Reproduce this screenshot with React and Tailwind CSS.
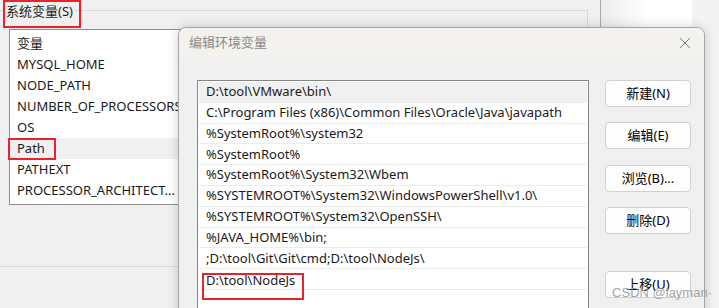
import React from 'react';

const font = { fontFamily: '"Noto Sans", "Noto Sans CJK SC", sans-serif' };

const sysVars = ['MYSQL_HOME', 'NODE_PATH', 'NUMBER_OF_PROCESSORS', 'OS', 'Path', 'PATHEXT', 'PROCESSOR_ARCHITECT...'];

const paths = [
    'D:\\tool\\VMware\\bin\\',
    'C:\\Program Files (x86)\\Common Files\\Oracle\\Java\\javapath',
    '%SystemRoot%\\system32',
    '%SystemRoot%',
    '%SystemRoot%\\System32\\Wbem',
    '%SYSTEMROOT%\\System32\\WindowsPowerShell\\v1.0\\',
    '%SYSTEMROOT%\\System32\\OpenSSH\\',
    '%JAVA_HOME%\\bin;',
    ';D:\\tool\\Git\\Git\\cmd;D:\\tool\\NodeJs\\',
    'D:\\tool\\NodeJs',
];

const Btn = ({ children, className = '' }) => (
    <div className={`w-[86px] h-[27px] flex items-center justify-center bg-[#fdfdfd] border border-[#d0d0d0] rounded-[4px] text-[13px] text-black ${className}`}>
        {children}
    </div>
);

export default function App() {
    return (
        <div className="relative w-[719px] h-[308px] overflow-hidden bg-[#f3f3f3] text-[13px] text-[#1a1a1a]" style={font}>
            <div className="flex h-full">
                {/* background window: 环境变量 */}
                <div className="w-[601px] h-full bg-[#f0f0f0] border-r border-[#a9a9a9]">
                    <div className="mt-[10px] w-[588px] h-[257px] border-t border-r border-b border-[#d9d9d9]">
                        <div className="-mt-[11px] ml-[3px] w-[78px] h-[28px] border-2 border-[#e8232b] flex items-start">
                            <span className="bg-[#f0f0f0] leading-[18px] pl-[1px] pr-[2px]">系统变量(S)</span>
                        </div>
                        <div className="mt-[1px] ml-[9px] w-[240px] h-[176px] bg-white border border-[#8f8f8f] pt-[3px]">
                            <div className="h-[21px] flex items-center pl-[7px]">变量</div>
                            {sysVars.map(v => (
                                <div key={v} className={`h-[21px] flex items-center ${v === 'Path' ? 'bg-[#f0f0f0]' : ''}`}>
                                    {v === 'Path' ? (
                                        <span className="-ml-[2px] w-[48px] h-[22px] border-2 border-[#e8232b] flex items-center pl-[7px]">Path</span>
                                    ) : (
                                        <span className="pl-[7px]">{v}</span>
                                    )}
                                </div>
                            ))}
                        </div>
                    </div>
                </div>
                <div className="w-[91px] h-full bg-gradient-to-r from-[#ececec] via-white to-white" />
                <div className="flex-1 h-full bg-[#f3f3f3]" />
            </div>

            {/* dialog: 编辑环境变量 */}
            <div className="absolute left-[178px] top-[27px] w-[527px] h-[300px] bg-[#f0f0f0] border border-[#a5a5a5] rounded-t-[8px] shadow-[0_0_12px_rgba(0,0,0,0.18)] overflow-hidden">
                <div className="h-[30px] bg-[#f3f2ef] flex items-center justify-between pl-[10px] pr-[10px]">
                    <span className="text-[#8a8a8a] text-[13px]">编辑环境变量</span>
                    <svg width="12" height="12" viewBox="0 0 12 12" className="mr-[3px]">
                        <path d="M1 1 L11 11 M11 1 L1 11" stroke="#7a7a7a" strokeWidth="1" fill="none" />
                    </svg>
                </div>
                <div className="flex pt-[22px] pl-[18px]">
                    <div className="w-[392px] h-[260px] bg-white border border-[#848484] p-[1px]">
                        {paths.map((p, i) => (
                            <div
                                key={p}
                                className={`h-[20.8px] flex border-b border-[#ececec] ${i === 0 ? 'bg-[#f0f0f0]' : ''} ${i === paths.length - 1 ? 'items-start' : 'items-center'}`}
                            >
                                {i === paths.length - 1 ? (
                                    <div className="ml-[3px] mt-[4px] w-[102px] h-[27px] shrink-0 border-2 border-[#e8232b] pl-[2px]">
                                        <div className="-mt-[3px] leading-[16px] whitespace-nowrap">{p}</div>
                                    </div>
                                ) : (
                                    <span className="pl-[7px] whitespace-nowrap">{p}</span>
                                )}
                            </div>
                        ))}
                    </div>
                    <div className="ml-[16px] flex flex-col">
                        <Btn>新建(N)</Btn>
                        <Btn className="mt-[15px]">编辑(E)</Btn>
                        <Btn className="mt-[16px]">浏览(B)...</Btn>
                        <Btn className="mt-[15px]">删除(D)</Btn>
                        <Btn className="mt-[37px]">上移(U)</Btn>
                    </div>
                </div>
            </div>

            <div className="absolute right-[7px] bottom-[7px] text-[13px] leading-[16px] text-[#9a9a9a]/90" style={{ fontFamily: '"Liberation Sans", Arial, sans-serif' }}>
                CSDN @layman·
            </div>
        </div>
    );
}
